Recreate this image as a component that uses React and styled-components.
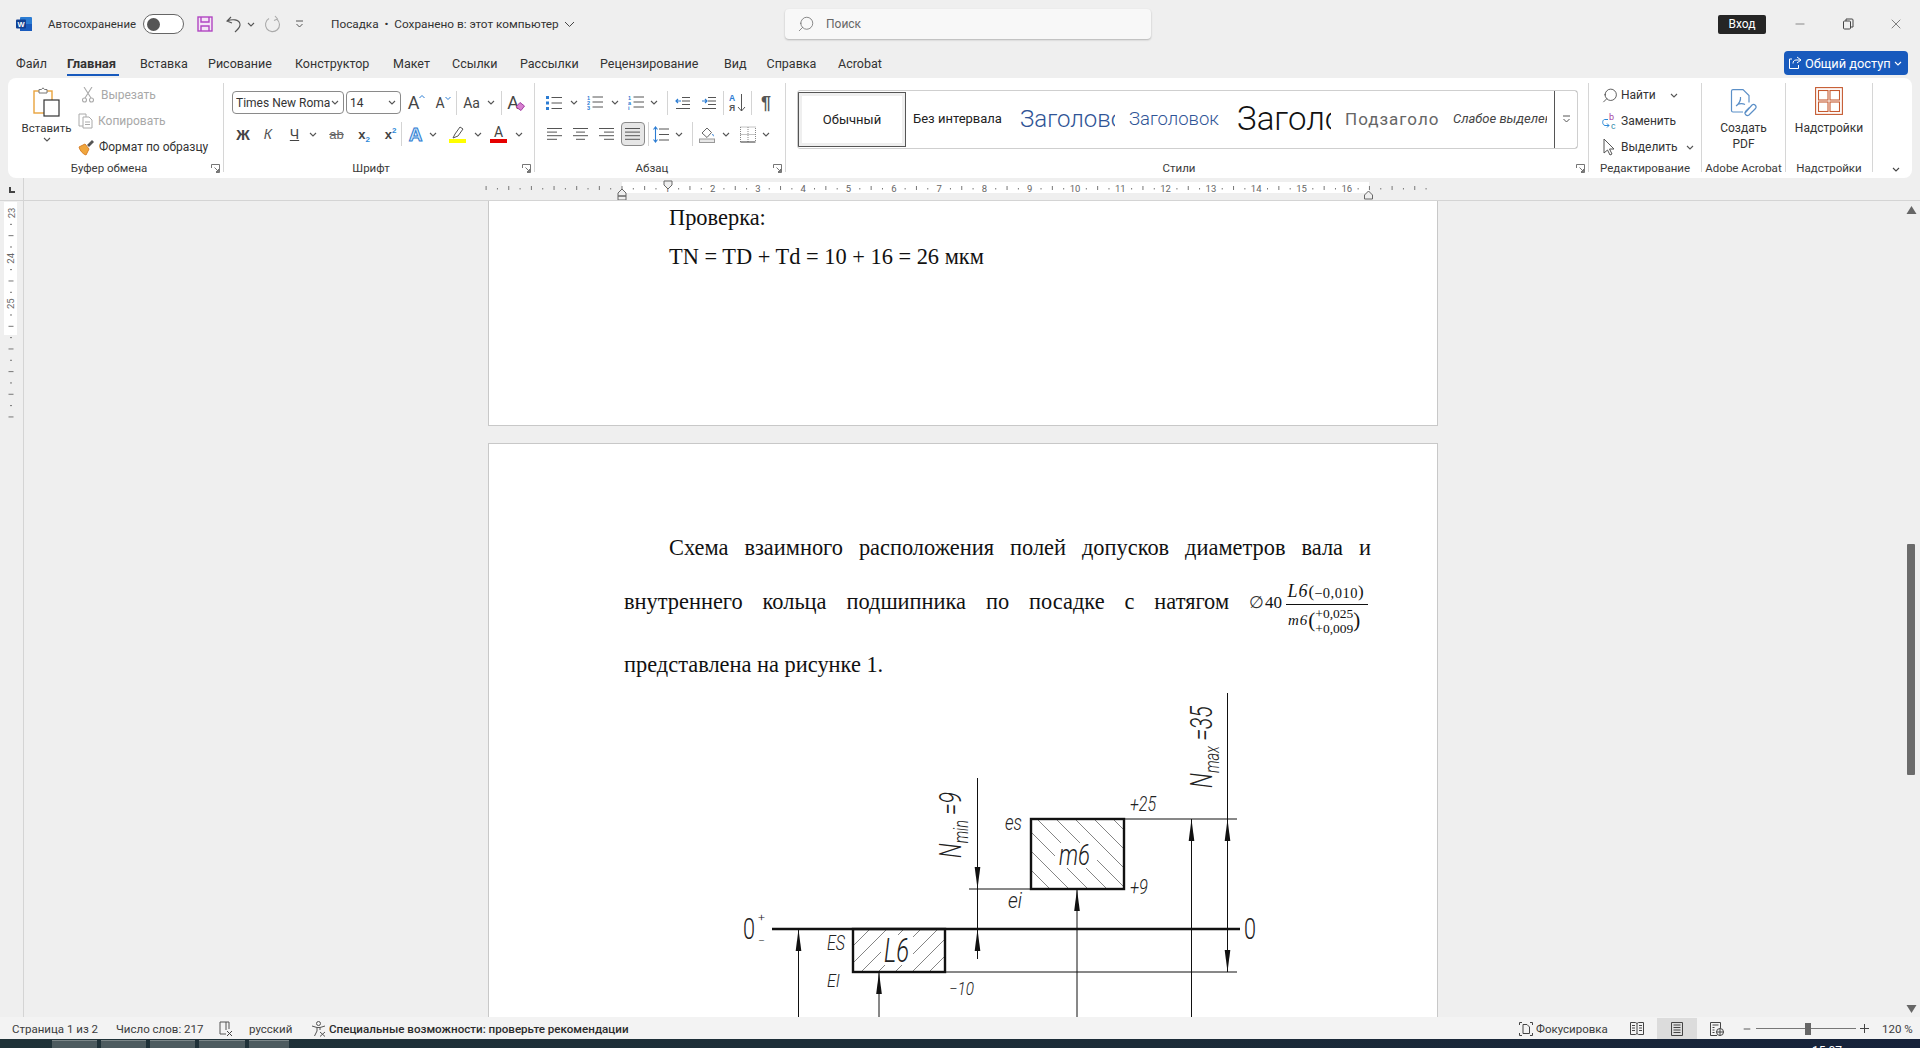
import React from "react";
import styled, { createGlobalStyle } from "styled-components";
import { Search, X, Minus } from "lucide-react";

const GlobalStyle = createGlobalStyle`
  html, body, #root { margin: 0; height: 100%; }
  body {
    background: #efefef;
    color: #333;
    font-family: Roboto, "Noto Sans", sans-serif;
    font-size: 12px;
    overflow: hidden;
  }
`;

const Window = styled.div`
  display: flex;
  flex-direction: column;
  height: 1048px;
  overflow: hidden;
`;

/* ---------- title bar ---------- */
const TitleBar = styled.div`
  display: grid;
  grid-template-columns: 785px 366px 1fr;
  align-items: center;
  height: 48px;
  flex: none;
`;
const TitleLeft = styled.div`
  display: flex;
  align-items: center;
  height: 100%;
  padding-left: 16px;
`;
const Cell = styled.div`
  display: flex;
  align-items: center;
  justify-content: ${(p) => p.$justify || "center"};
  flex: none;
  gap: ${(p) => p.$gap || 0}px;
  width: ${(p) => p.$w}px;
  height: 100%;
  white-space: nowrap;
`;
const AutoSave = styled(Cell)`
  font-size: 11.4px;
`;
const Toggle = styled.div`
  display: flex;
  align-items: center;
  box-sizing: border-box;
  width: 41px;
  height: 20px;
  margin-right: 13px;
  padding-left: 3px;
  border: 1px solid #666;
  border-radius: 10px;
  background: #fff;
  &::before {
    content: "";
    width: 13px;
    height: 13px;
    border-radius: 50%;
    background: #555;
  }
`;
const DocTitle = styled.div`
  display: flex;
  align-items: center;
  gap: 5px;
  margin-left: 14px;
  font-size: 11.8px;
  white-space: nowrap;
`;
const SearchBox = styled.div`
  display: flex;
  align-items: center;
  gap: 11px;
  box-sizing: border-box;
  height: 30px;
  padding-left: 12px;
  border-radius: 4px;
  background: #f8f8f8;
  box-shadow: 0 1px 2px rgba(0, 0, 0, 0.25);
  color: #666;
`;
const TitleRight = styled.div`
  display: flex;
  align-items: center;
  justify-content: flex-end;
  height: 100%;
`;
const SignIn = styled.div`
  display: flex;
  align-items: center;
  justify-content: center;
  width: 48px;
  height: 19px;
  margin-right: 10px;
  border-radius: 2px;
  background: #252525;
  color: #fff;
`;
const WinBtn = styled.div`
  display: flex;
  align-items: center;
  justify-content: center;
  width: 48px;
  height: 100%;
  color: #444;
`;

/* ---------- tabs ---------- */
const TabsRow = styled.div`
  display: flex;
  align-items: center;
  height: 30px;
  flex: none;
  padding-left: 16px;
`;
const Tab = styled.div`
  position: relative;
  flex: none;
  width: ${(p) => p.$w}px;
  font-size: ${(p) => (p.$active ? 13 : 12.5)}px;
  line-height: 31px;
  white-space: nowrap;
  font-weight: ${(p) => (p.$active ? 700 : 400)};
  &::after {
    content: "";
    display: ${(p) => (p.$active ? "block" : "none")};
    position: absolute;
    left: 0;
    bottom: 3px;
    width: 52px;
    height: 2px;
    background: #185abd;
  }
`;
const ShareBtn = styled.div`
  display: flex;
  align-items: center;
  gap: 3px;
  box-sizing: border-box;
  width: 124px;
  height: 24px;
  margin-left: auto;
  margin-right: 12px;
  padding-left: 4px;
  border-radius: 4px;
  background: #185abd;
  color: #fff;
  font-size: 12.8px;
  white-space: nowrap;
`;

/* ---------- ribbon ---------- */
const Ribbon = styled.div`
  display: flex;
  flex: none;
  box-sizing: border-box;
  height: 100px;
  margin: 0 8px;
  padding-top: 5px;
  border-radius: 8px;
  background: #fff;
`;
const Group = styled.div`
  display: grid;
  grid-template-rows: 73px 16px;
  flex: none;
  box-sizing: border-box;
  width: ${(p) => p.$w}px;
  height: 89px;
  border-right: 1px solid #d6d6d6;
`;
const GroupBody = styled.div`
  display: flex;
  flex-direction: ${(p) => p.$dir || "row"};
  gap: ${(p) => p.$gap || 0}px;
  padding: ${(p) => p.$pt || 0}px 0 0 ${(p) => p.$pl || 0}px;
  min-width: 0;
`;
const GroupFoot = styled.div`
  display: flex;
  align-items: center;
  height: 16px;
`;
const GroupLabel = styled.div`
  flex: none;
  width: ${(p) => p.$w}px;
  text-align: center;
  line-height: 24px;
  height: 16px;
  font-size: 11.5px;
  white-space: nowrap;
  color: #3a3a3a;
`;
const Launcher = styled.svg`
  margin: 8px 3px 0 auto;
  width: 9px;
  height: 9px;
`;
const ToolRow = styled.div`
  display: flex;
  align-items: center;
  flex: none;
  height: ${(p) => p.$h || 24}px;
`;
const Sep = styled.div`
  flex: none;
  width: 1px;
  height: 24px;
  margin-left: ${(p) => p.$ml || 0}px;
  background: #d4d4d4;
`;
const PasteColumn = styled.div`
  display: flex;
  flex-direction: column;
  align-items: center;
  flex: none;
  box-sizing: border-box;
  width: 70px;
  padding: 4px 0 0 7px;
  font-size: 11.5px;
  line-height: 17px;
  svg:first-child { margin-bottom: 3px; }
`;
const ClipRow = styled.div`
  display: flex;
  align-items: center;
  gap: 4px;
  height: 26px;
  margin-top: ${(p) => (p.$first ? -1 : 0)}px;
  padding-left: ${(p) => p.$pl || 0}px;
  white-space: nowrap;
  color: ${(p) => (p.$off ? "#a8a8a8" : "#333")};
`;
const Combo = styled.div`
  display: flex;
  align-items: center;
  justify-content: space-between;
  box-sizing: border-box;
  width: ${(p) => p.$w}px;
  height: 23px;
  margin-right: 2px;
  padding: 0 4px 0 3px;
  border: 1px solid #8a8a8a;
  border-radius: 4px;
  font-size: 12px;
  span {
    overflow: hidden;
    white-space: nowrap;
  }
`;
const FontName = styled.span`
  width: 94px;
`;
const Letter = styled.span`
  font-family: ${(p) => (p.$ui ? "Roboto, sans-serif" : '"Liberation Sans", sans-serif')};
  font-size: ${(p) => p.$size || 14}px;
  font-weight: ${(p) => p.$weight || 400};
  font-style: ${(p) => (p.$italic ? "italic" : "normal")};
  text-decoration: ${(p) => p.$line || "none"};
  color: ${(p) => p.$color || "#444"};
  line-height: 1;
`;
const OutlineLetter = styled(Letter)`
  -webkit-text-stroke: 1px #2b7cd3;
`;
const Small = styled.sub`
  font-size: 8px;
  color: #2b88d8;
  line-height: 0;
  vertical-align: ${(p) => (p.$up ? "6px" : "-3px")};
`;
const ColorBar = styled.div`
  display: flex;
  flex-direction: column;
  align-items: center;
  width: 17px;
  &::after {
    content: "";
    width: 17px;
    height: 4px;
    background: ${(p) => p.$color};
  }
`;
const PressedBox = styled.div`
  display: flex;
  align-items: center;
  justify-content: center;
  flex: none;
  box-sizing: border-box;
  width: 24px;
  height: 24px;
  margin-left: 2px;
  border: 1px solid #8a8a8a;
  border-radius: 4px;
  background: #e6e6e6;
`;
const EraserSlot = styled.span`
  display: flex;
  margin: 8px 0 0 -4px;
`;
const Gallery = styled.div`
  display: flex;
  box-sizing: border-box;
  width: 781px;
  height: 59px;
  border: 1px solid #cfcfcf;
  border-radius: 3px;
  overflow: hidden;
`;
const NormalStyle = styled.div`
  display: flex;
  align-items: center;
  justify-content: center;
  flex: none;
  box-sizing: border-box;
  width: 108px;
  margin: 1px 0;
  border: 1.5px solid #555;
  box-shadow: inset 0 0 0 3px #efefef;
  font-size: 13px;
  color: #222;
`;
const StyleCell = styled.div`
  display: flex;
  align-items: center;
  flex: none;
  box-sizing: border-box;
  width: ${(p) => p.$w}px;
  padding-left: ${(p) => p.$pl}px;
`;
const StyleText = styled.div`
  width: ${(p) => p.$clip}px;
  overflow: hidden;
  white-space: nowrap;
  font-size: ${(p) => p.$size}px;
  font-weight: ${(p) => p.$weight || 400};
  font-style: ${(p) => (p.$italic ? "italic" : "normal")};
  letter-spacing: ${(p) => p.$ls || 0}px;
  color: ${(p) => p.$color};
  line-height: 1.4;
`;
const GalleryMore = styled.div`
  display: flex;
  align-items: center;
  justify-content: center;
  flex: 1;
  margin: -1px;
  border: 1.5px solid #555;
  border-radius: 0 3px 3px 0;
  background: #fff;
`;
const EditRow = styled.div`
  display: flex;
  align-items: center;
  flex: none;
  width: 84px;
  height: 26px;
  margin-top: ${(p) => (p.$first ? -1 : 0)}px;
  white-space: nowrap;
  svg:first-child { flex: none; width: 18px; margin-right: 2px; }
`;
const EditChev = styled.span`
  display: flex;
  margin-left: ${(p) => (p.$end ? "auto" : "3px")};
`;
const BigTool = styled.div`
  display: flex;
  flex-direction: column;
  align-items: center;
  width: 100%;
  padding-top: ${(p) => p.$pt}px;
  text-align: center;
  line-height: 16px;
  svg { margin-bottom: ${(p) => p.$gap}px; }
`;
const Collapse = styled.div`
  display: flex;
  align-items: flex-end;
  justify-content: flex-end;
  flex: 1;
  padding: 0 12px 6px 0;
`;

/* ---------- rulers + document ---------- */
const RulerRow = styled.div`
  display: flex;
  flex: none;
  height: 23px;
  border-bottom: 1px solid #d4d4d4;
  box-sizing: border-box;
`;
const Corner = styled.div`
  display: flex;
  align-items: center;
  justify-content: center;
  flex: none;
  box-sizing: border-box;
  width: 24px;
  padding-top: 1px;
  border-right: 1px solid #d4d4d4;
`;
const Workspace = styled.div`
  display: flex;
  flex: 1;
  min-height: 0;
`;
const VRuler = styled.div`
  flex: none;
  box-sizing: border-box;
  width: 24px;
  border-right: 1px solid #d4d4d4;
`;
const Canvas = styled.div`
  display: flex;
  flex: 1;
  flex-direction: column;
  align-items: center;
  gap: 17px;
  overflow: hidden;
`;
const Page = styled.div`
  flex: none;
  box-sizing: border-box;
  width: 950px;
  height: ${(p) => p.$h}px;
  background: #fff;
  border: 1px solid #c8c8c8;
  border-top-width: ${(p) => (p.$open ? 0 : 1)}px;
  padding: ${(p) => p.$pt}px 66px 0 ${(p) => p.$pl}px;
  font-family: "Liberation Serif", "Times New Roman", serif;
  font-size: 22.4px;
  color: #111;
`;
const PlainLine = styled.div`
  height: 39px;
  line-height: 39px;
  margin-top: ${(p) => p.$mt || 0}px;
`;
const JustLine = styled.div`
  height: 54px;
  line-height: 54px;
  margin-bottom: ${(p) => p.$mb || 0}px;
  text-indent: ${(p) => p.$indent || 0}px;
  text-align: justify;
  text-align-last: ${(p) => (p.$last ? "left" : "justify")};
  white-space: nowrap;
`;
const Formula = styled.span`
  display: inline-flex;
  align-items: center;
  height: 54px;
  vertical-align: top;
  padding-right: 3px;
  text-indent: 0;
  text-align-last: left;
  line-height: 1;
`;
const Diameter = styled.span`
  font-size: 17px;
  color: #333;
  margin-right: 1px;
`;
const FormulaNumber = styled.span`
  font-size: 17px;
`;
const Fraction = styled.span`
  display: inline-flex;
  flex-direction: column;
  align-items: center;
  width: 81px;
  margin-left: 5px;
  margin-top: 11px;
`;
const Numer = styled.span`
  display: flex;
  align-items: center;
  width: 100%;
  height: 25px;
  border-bottom: 1px solid #111;
  font-size: 16px;
  padding-left: 1px;
  white-space: nowrap;
`;
const Denom = styled.span`
  display: flex;
  align-items: center;
  width: 100%;
  height: 32px;
  font-size: 15px;
  padding-left: 2px;
  white-space: nowrap;
`;
const Ital = styled.i`
  font-size: ${(p) => p.$size}px;
  letter-spacing: 1px;
`;
const LowLimit = styled.span`
  margin-top: 5px;
  font-size: 14.5px;
  letter-spacing: 0.5px;
`;
const Limits = styled.span`
  display: inline-flex;
  flex-direction: column;
  font-size: 13.5px;
  line-height: 15px;
`;
const Paren = styled.span`
  font-size: ${(p) => p.$size}px;
  font-weight: 300;
`;
const Drawing = styled.svg`
  display: block;
  margin: -2px 0 0 116px;
`;
const Scrollbar = styled.div`
  display: flex;
  flex-direction: column;
  align-items: center;
  flex: none;
  box-sizing: border-box;
  width: 18px;
  padding: 5px 0 4px;
`;
const Arrow = styled.svg`
  flex: none;
  margin-top: ${(p) => (p.$end ? "auto" : "0")};
`;
const Thumb = styled.div`
  flex: none;
  width: 8px;
  height: 231px;
  margin-top: 330px;
  background: #6b6b6b;
  border-radius: 1px;
`;

/* ---------- status + taskbar ---------- */
const StatusBar = styled.div`
  display: flex;
  align-items: center;
  flex: none;
  box-sizing: border-box;
  height: 22px;
  padding: 1px 0 0 12px;
  background: #f3f3f3;
  font-size: 11.5px;
  color: #3c3c3c;
  white-space: nowrap;
`;
const Strong = styled.div`
  font-weight: 500;
  font-size: 11.6px;
  color: #2c2c2c;
`;
const StatusRight = styled.div`
  display: flex;
  align-items: center;
  height: 100%;
  margin-left: auto;
`;
const ViewBtn = styled.div`
  display: flex;
  align-items: center;
  justify-content: center;
  flex: none;
  width: ${(p) => p.$w || 40}px;
  height: 100%;
  background: ${(p) => (p.$on ? "#dcdcdc" : "transparent")};
`;
const Slider = styled.div`
  display: flex;
  align-items: center;
  flex: none;
  width: 100px;
  &::before, &::after {
    content: "";
    height: 1px;
    background: #777;
  }
  &::before { flex: 49; }
  &::after { flex: 45; }
`;
const SliderThumb = styled.div`
  flex: none;
  width: 6px;
  height: 12px;
  background: #666;
`;
const Zoom = styled.div`
  margin-left: 9px;
  width: 38px;
`;
const Taskbar = styled.div`
  display: flex;
  flex: none;
  gap: 4px;
  height: 8px;
  padding: 1px 78px 0 52px;
  overflow: hidden;
  background: linear-gradient(90deg, #1f3238, #1c2c38 60%, #16223a);
`;
const TaskThumb = styled.div`
  flex: none;
  width: ${(p) => p.$w}px;
  height: 8px;
  background: #4d5b5f;
  border-top: 1px solid #7c8789;
  box-sizing: border-box;
`;
const Clock = styled.div`
  margin-left: auto;
  padding-top: 4px;
  color: #fff;
  font-size: 12px;
  line-height: 14px;
`;

/* ---------- small drawings ---------- */
const Chev = ({ c = "#555" }) => (
  <svg width="8" height="5" viewBox="0 0 8 5" fill="none">
    <path d="M1 1l3 3 3-3" stroke={c} strokeWidth="1.1" />
  </svg>
);
const TitleChev = () => (
  <svg width="11" height="7" viewBox="0 0 11 7" fill="none">
    <path d="M1 1l4.5 4.5L10 1" stroke="#444" />
  </svg>
);
const Launch = () => (
  <Launcher viewBox="0 0 9 9" fill="none" stroke="#666" strokeWidth="0.9">
    <path d="M.5 4V.5h8v8H5M3.5 3.5l4 4M7.5 5v2.5H5" />
  </Launcher>
);
const Lines = ({ rows, color = "#555", w = 16 }) => (
  <svg width={w} height="14" viewBox={`0 0 ${w} 14`} stroke={color} strokeWidth="1">
    {rows.map(([a, b], i) => (
      <path key={i} d={`M${a} ${1.5 + i * 3.6}H${b}`} />
    ))}
  </svg>
);
const WordLogo = () => (
  <svg width="16" height="16" viewBox="0 0 16 16">
    <rect x="4" y="1" width="12" height="14" rx="1" fill="#2b7cd3" />
    <rect x="4" y="8" width="12" height="7" fill="#185abd" />
    <rect x="0" y="3.5" width="10" height="9" rx="1" fill="#103f91" />
    <text x="5" y="10.5" textAnchor="middle" fontSize="7.5" fontWeight="700" fill="#fff" fontFamily="Liberation Sans">W</text>
  </svg>
);
const SaveIcon = () => (
  <svg width="16" height="16" viewBox="0 0 16 16" fill="#f3e5f5" stroke="#b146c2" strokeWidth="1.4">
    <rect x="1" y="1" width="14" height="14" />
    <path d="M4 1v5h8V1M4 15v-5h8v5" fill="none" />
  </svg>
);
const UndoIcon = () => (
  <svg width="16" height="18" viewBox="0 0 16 18" fill="none" stroke="#555" strokeWidth="1.1">
    <path d="M5 2L1 6l5 2M1 6c5-2 12-2 13 3 .6 3.4-3 6-5 8" />
  </svg>
);
const RedoIcon = () => (
  <svg width="17" height="18" viewBox="0 0 17 18" fill="none" stroke="#aaa" strokeWidth="1.1">
    <path d="M11 1l2.5 3-3.5 1.5M13 4.3A7 7 0 1 1 5 3.6" />
  </svg>
);
const CustomizeIcon = () => (
  <svg width="9" height="9" viewBox="0 0 9 9" fill="none" stroke="#555">
    <path d="M1 1h7M1.5 4l3 3 3-3" />
  </svg>
);
const ShareIcon = () => (
  <svg width="14" height="14" viewBox="0 0 14 14" fill="none" stroke="#fff" strokeWidth="1">
    <path d="M9 1l4 3-4 3M13 4H8C6 4 5 5.5 5 7.5M4 3H1.5v9.5h9V9" />
  </svg>
);
const PasteIcon = () => (
  <svg width="28" height="30" viewBox="0 0 28 30" fill="none">
    <rect x="1" y="4" width="18" height="22" fill="#fff" stroke="#e8a33d" strokeWidth="1.4" />
    <path d="M6 4V2.5h2.5L10 .8l1.5 1.7H14V6H6z" fill="#fff" stroke="#777" />
    <rect x="11" y="13" width="15" height="16" fill="#fff" stroke="#333" strokeWidth="1.2" />
  </svg>
);
const CutIcon = () => (
  <svg width="12" height="16" viewBox="0 0 12 16" fill="none" stroke="#aaa" strokeWidth="1.1">
    <path d="M2 0l7 11M10 0L3 11" />
    <circle cx="2.5" cy="13" r="2" />
    <circle cx="9.5" cy="13" r="2" />
  </svg>
);
const CopyIcon = () => (
  <svg width="16" height="16" viewBox="0 0 16 16" fill="#fff" stroke="#aaa">
    <path d="M1 1h7v12H1z" />
    <path d="M5 4h6l3 3v8H5z" />
    <path d="M7 9h5M7 11.5h5" />
  </svg>
);
const BrushIcon = () => (
  <svg width="17" height="18" viewBox="0 0 17 18">
    <path d="M1 9l6-3 4 5-3 6C5 16 2 13 1 9z" fill="#f0a63c" stroke="#d9822b" />
    <path d="M9 7l5-5 2 2-5 5z" fill="#555" />
  </svg>
);
const BulletsIcon = () => (
  <svg width="16" height="14" viewBox="0 0 16 14">
    <g fill="#2b7cd3"><rect y="0" width="3" height="3" /><rect y="5.5" width="3" height="3" /><rect y="11" width="3" height="3" /></g>
    <path d="M5.5 1.5H16M5.5 7H16M5.5 12.5H16" stroke="#555" />
  </svg>
);
const NumberedIcon = ({ labels = ["1", "2", "3"] }) => (
  <svg width="16" height="15" viewBox="0 0 16 15">
    {labels.map((l, i) => (
      <text key={l} x="0" y={4.6 + i * 5} fontSize="5.5" fontWeight="700" fill="#2b7cd3" fontFamily="Liberation Sans">{l}</text>
    ))}
    <path d="M5.5 2H16M5.5 7H16M5.5 12H16" stroke="#555" />
  </svg>
);
const IndentIcon = ({ flip }) => (
  <svg width="15" height="14" viewBox="0 0 15 14" fill="none">
    <path d="M7 1.5h8M7 5h8M7 8.5h8M1 12.5h14" stroke="#555" />
    <path d={flip ? "M1 5h5M4 3l2 2-2 2" : "M6 5H1M3 3L1 5l2 2"} stroke="#2b7cd3" strokeWidth="1.2" />
  </svg>
);
const SortIcon = () => (
  <svg width="17" height="20" viewBox="0 0 17 20">
    <text x="0" y="8" fontSize="8.5" fontWeight="700" fill="#2b7cd3" fontFamily="Liberation Sans">А</text>
    <text x="0" y="18" fontSize="8.5" fontWeight="700" fill="#555" fontFamily="Liberation Sans">Я</text>
    <path d="M12.5 1v17M9 14l3.5 4 3.5-4" fill="none" stroke="#555" />
  </svg>
);
const LineSpacingIcon = () => (
  <svg width="16" height="17" viewBox="0 0 16 17" fill="none">
    <path d="M6 3h10M6 8.5h10M6 14h10" stroke="#555" />
    <path d="M2.5 1v15M.5 3.5l2-2.5 2 2.5M.5 13.5l2 2.5 2-2.5" stroke="#2b7cd3" strokeWidth="1.1" />
  </svg>
);
const ShadingIcon = () => (
  <svg width="16" height="18" viewBox="0 0 16 18" fill="none" stroke="#666">
    <path d="M3 8l5-5 4.5 4.5L8 12.5z" />
    <path d="M13.5 9c.6 1 1 1.6 1 2.2" stroke="#2b7cd3" />
    <rect x=".5" y="14" width="15" height="3.5" fill="#e8e8e8" stroke="#999" />
  </svg>
);
const BordersIcon = () => (
  <svg width="16" height="17" viewBox="0 0 16 17" fill="none" stroke="#888" strokeDasharray="1 1">
    <path d="M.5 1h15v15M.5 1v15M8 1v15M.5 8.5h15" />
    <path d="M.5 16h15" stroke="#333" strokeDasharray="none" />
  </svg>
);
const PenIcon = () => (
  <svg width="17" height="13" viewBox="0 0 17 13" fill="none" stroke="#555">
    <path d="M4 12l2-4 5-7 3 2-5 7z" />
  </svg>
);
const EraserIcon = () => (
  <svg width="10" height="9" viewBox="0 0 10 9">
    <path d="M5 .5l4.5 3.500-3.500 4.500L1 5z" fill="#d77fd0" stroke="#a340a3" />
  </svg>
);
const CaretBox = styled.svg`
  align-self: flex-start;
  margin-top: ${(p) => (p.$down ? 5 : 3)}px;
`;
const Caret = ({ down }) => (
  <CaretBox $down={down} width="6" height="5" viewBox="0 0 6 5" fill="none" stroke="#2b7cd3">
    <path d={down ? "M.5 1L3 3.5 5.5 1" : "M.5 4L3 1.5 5.5 4"} />
  </CaretBox>
);
const ReplaceIcon = () => (
  <svg width="18" height="18" viewBox="0 0 18 18" fill="none">
    <text x="8" y="7.5" fontSize="9" fill="#a33ea1" fontFamily="Liberation Sans">b</text>
    <text x="10" y="17" fontSize="9" fill="#2b88a8" fontFamily="Liberation Sans">c</text>
    <path d="M7 7.5H3.500C1 8 1 13 4 13.500H8M6 11.500l2 2-2 2" stroke="#2b88d8" />
  </svg>
);
const SelectIcon = () => (
  <svg width="18" height="18" viewBox="0 0 18 18" fill="#fff" stroke="#555">
    <path d="M3 1v14l3.5-3 2.5 5 2-1-2.5-5H13z" />
  </svg>
);
const PdfIcon = () => (
  <svg width="27" height="29" viewBox="0 0 27 29" fill="none" stroke="#5b8fc7" strokeWidth="1.2">
    <path d="M13 23H3a1.500 1.500 0 0 1-1.500-1.500V2A1.500 1.500 0 0 1 3 .6h10l6 6v7" />
    <path d="M6 17c3-2 5-6 4.500-9M7 15.500c3-1 6-1 8 0" />
    <path d="M15 24l7-8a2.500 2.500 0 0 1 3.500 3.500L19 26a2.500 2.500 0 0 1-3.500-3.500l4-4" />
  </svg>
);
const AddinsIcon = () => (
  <svg width="28" height="28" viewBox="0 0 28 28" fill="#fff" stroke="#c55a30" strokeWidth="1.1">
    <rect x=".6" y=".6" width="26.8" height="26.8" />
    <rect x="3.5" y="3.5" width="9.5" height="9.5" />
    <rect x="15" y="3.5" width="9.5" height="9.5" />
    <rect x="3.5" y="15" width="9.5" height="9.5" />
    <rect x="15" y="15" width="9.5" height="9.5" />
  </svg>
);
const ProofIcon = () => (
  <svg width="15" height="16" viewBox="0 0 15 16" fill="none" stroke="#555">
    <path d="M7 13H1V1h9v7M7 1v8" />
    <path d="M8 10l5 5M13 10l-5 5" stroke="#444" />
  </svg>
);
const AccessIcon = () => (
  <svg width="15" height="16" viewBox="0 0 15 16" fill="none" stroke="#555">
    <circle cx="7.5" cy="2.5" r="2" />
    <path d="M1 5l5 1.500h3L14 5M6 6.500V10l-2.500 5M9 6.500V9" />
    <path d="M9 11l5 4.500M14 11l-5 4.500" />
  </svg>
);
const FocusIcon = () => (
  <svg width="14" height="14" viewBox="0 0 14 14" fill="none" stroke="#444">
    <path d="M.5 3V.5H3M11 .5h2.500V3M.5 11v2.500H3M11 13.500h2.500V11" />
    <path d="M4 2.500h4l2.500 2.500v6.500H4z" />
  </svg>
);
const ReadIcon = () => (
  <svg width="14" height="13" viewBox="0 0 14 13" fill="none" stroke="#444">
    <path d="M.5.5h5l1.500 1 1.500-1h5v12h-5L7 11.500 5.500 12.500h-5zM7 1.500v10M2 3.500h3M2 6h3M2 8.500h3M9 3.500h3M9 6h3M9 8.500h3" />
  </svg>
);
const PrintIcon = () => (
  <svg width="12" height="14" viewBox="0 0 12 14" fill="none" stroke="#444">
    <path d="M.5.5h11v13H.5zM2.500 3h7M2.500 5.500h7M2.500 8h7M2.500 10.500h7" />
  </svg>
);
const WebIcon = () => (
  <svg width="14" height="14" viewBox="0 0 14 14" fill="none" stroke="#444">
    <path d="M7 13.500H.5V.5h10v6M2.500 3h6M2.500 5.500h2M2.500 8h2M2.500 10.500h2" />
    <circle cx="10" cy="10" r="3.5" />
    <path d="M6.500 10h7M10 6.500v7" />
  </svg>
);

/* ---------- rulers ---------- */
const CM = 45.3;
const ZERO = 622;
const topTicks = [];
for (let i = -12; i <= 71; i++) topTicks.push(i);

const TopRuler = () => (
  <svg width="1896" height="22" viewBox="24 178 1896 22">
    <rect x={ZERO} y="182" width="747" height="11" fill="#fff" />
    {topTicks.map((i) => {
      const x = ZERO + (i * CM) / 4;
      if (i > 0 && i % 4 === 0 && i <= 64) {
        return (
          <text key={i} x={x} y="192" textAnchor="middle" fontSize="9.5" fill="#666" fontFamily="Roboto">{i / 4}</text>
        );
      }
      return i % 2 === 0
        ? <path key={i} d={`M${x} 186v4`} stroke="#777" />
        : <path key={i} d={`M${x} 188v1.5`} stroke="#777" />;
    })}
    <g fill="#efefef" stroke="#666">
      <path d="M664 181h8v4l-4 4-4-4z" />
      <path d="M618 193l4-4 4 4v3h-8zM618 196h8v4h-8z" />
      <path d="M1364.5 195l4-4 4 4v4h-8z" />
    </g>
  </svg>
);

const sideTicks = [];
for (let i = 0; i < 19; i++) sideTicks.push(i);

const SideSvg = styled.svg`
  display: block;
`;
const SideRuler = () => (
  <SideSvg width="23" height="240" viewBox="0 201 23 240">
    <rect x="4" y="202" width="13" height="133" fill="#fff" />
    {sideTicks.map((i) => {
      const y = 213 + i * 11.33;
      const x = 11;
      if (i % 4 === 0 && i < 12) {
        return (
          <text key={i} x={x} y={y} textAnchor="middle" dominantBaseline="central" fontSize="9.5" fill="#666" fontFamily="Roboto" transform={`rotate(-90 ${x} ${y})`}>{23 + i / 4}</text>
        );
      }
      return i % 2 === 0
        ? <path key={i} d={`M${x - 2.5} ${y}h5`} stroke="#777" />
        : <path key={i} d={`M${x - 1} ${y}h2`} stroke="#777" />;
    })}
  </SideSvg>
);

/* ---------- tolerance diagram (real screen coordinates) ---------- */
const hatch = (x1, x2, y1, y2, step, dir) => {
  const out = [];
  const h = y2 - y1;
  for (let x = x1 - h; x < x2 + h; x += step) {
    out.push(dir > 0
      ? `M${x} ${y2}L${x + h} ${y1}`
      : `M${x} ${y1}L${x + h} ${y2}`);
  }
  return out.join("");
};
const Tip = ({ x, y, down }) => (
  <path d={down ? `M${x} ${y}l-2.8 -22h5.6z` : `M${x} ${y}l-2.8 22h5.6z`} fill="#111" />
);
const Note = ({ x, y, w, size = 16, plain, children }) => (
  <text
    x={x}
    y={y}
    fontSize={size}
    fontStyle={plain ? "normal" : "italic"}
    fontWeight="300"
    fontFamily="Roboto, sans-serif"
    fill="#222"
    textLength={w}
    lengthAdjust="spacingAndGlyphs"
  >
    {children}
  </text>
);

const ToleranceScheme = () => (
  <Drawing width="520" height="330" viewBox="740 690 520 330">
    <defs>
      <clipPath id="m6clip"><rect x="1031" y="819" width="93" height="70" /></clipPath>
      <clipPath id="l6clip"><rect x="853" y="929" width="92" height="43" /></clipPath>
    </defs>
    <path clipPath="url(#m6clip)" d={hatch(1031, 1124, 819, 889, 19, -1)} stroke="#666" strokeWidth="0.8" fill="none" />
    <path clipPath="url(#l6clip)" d={hatch(853, 945, 929, 972, 17, 1)} stroke="#666" strokeWidth="0.8" fill="none" />
    <rect x="1055" y="843" width="42" height="25" fill="#fff" />
    <rect x="881" y="935" width="32" height="30" fill="#fff" />
    <g stroke="#111" fill="none" strokeWidth="1">
      <path d="M1124 819H1237M945 972H1237M969 889H1031" />
      <path d="M977.5 778V959M1227.5 693V972M1191.5 819V1018M1077 889V1018M879 972V1018M798.5 929V1018" />
    </g>
    <g stroke="#111" fill="none" strokeWidth="2.4">
      <path d="M772 929H1240" />
      <rect x="853" y="929" width="92" height="43" />
      <rect x="1031" y="819" width="93" height="70" />
    </g>
    <Tip x={977.5} y={889} down />
    <Tip x={977.5} y={929} />
    <Tip x={1227.5} y={819} />
    <Tip x={1227.5} y={972} down />
    <Tip x={1191.5} y={819} />
    <Tip x={1077} y={889} />
    <Tip x={879} y={972} />
    <Tip x={798.5} y={929} />
    <Note x={743} y={939} w={12} size={30} plain>0</Note>
    <Note x={758} y={921} w={7} size={11} plain>+</Note>
    <Note x={758} y={944} w={7} size={11} plain>−</Note>
    <Note x={1244} y={939} w={12} size={30} plain>0</Note>
    <Note x={827} y={950} w={18} size={21}>ES</Note>
    <Note x={827} y={987} w={13} size={18}>EI</Note>
    <Note x={949} y={995} w={25} size={19}>−10</Note>
    <Note x={884} y={962} w={25} size={33}>L6</Note>
    <Note x={1059} y={865} w={31} size={29}>m6</Note>
    <Note x={1005} y={830} w={17} size={22}>es</Note>
    <Note x={1008} y={908} w={14} size={22}>ei</Note>
    <Note x={1130} y={811} w={26} size={21}>+25</Note>
    <Note x={1130} y={894} w={18} size={21}>+9</Note>
    <text transform="rotate(-90 961 858)" x="961" y="858" fontStyle="italic" fontWeight="300" fontFamily="Roboto, sans-serif" fill="#222" fontSize="31" textLength="66" lengthAdjust="spacingAndGlyphs">
      N<tspan fontSize="21" dy="7">min</tspan><tspan dy="-7"> =9</tspan>
    </text>
    <text transform="rotate(-90 1212 788)" x="1212" y="788" fontStyle="italic" fontWeight="300" fontFamily="Roboto, sans-serif" fill="#222" fontSize="31" textLength="82" lengthAdjust="spacingAndGlyphs">
      N<tspan fontSize="21" dy="7">max</tspan><tspan dy="-7"> =35</tspan>
    </text>
  </Drawing>
);

const tabs = [
  ["Файл", 51], ["Главная", 73], ["Вставка", 68], ["Рисование", 87], ["Конструктор", 98],
  ["Макет", 59], ["Ссылки", 68], ["Рассылки", 80], ["Рецензирование", 124], ["Вид", 42.5],
  ["Справка", 71.5], ["Acrobat", 60],
];

const MirroredSearch = styled(Search)`
  transform: scaleX(-1);
`;

export default function App() {
  return (
    <Window>
      <GlobalStyle />
      <TitleBar>
        <TitleLeft>
          <Cell $w={32} $justify="flex-start"><WordLogo /></Cell>
          <AutoSave $w={95} $justify="flex-start">Автосохранение</AutoSave>
          <Toggle />
          <Cell $w={29} $justify="flex-start"><SaveIcon /></Cell>
          <Cell $w={38} $justify="flex-start" $gap={5}><UndoIcon /><Chev /></Cell>
          <Cell $w={31} $justify="flex-start"><RedoIcon /></Cell>
          <Cell $w={22} $justify="flex-start"><CustomizeIcon /></Cell>
          <DocTitle>Посадка&nbsp;&nbsp;•&nbsp;&nbsp;Сохранено в: этот компьютер <TitleChev /></DocTitle>
        </TitleLeft>
        <SearchBox><MirroredSearch size={18} strokeWidth={1} />Поиск</SearchBox>
        <TitleRight>
          <SignIn>Вход</SignIn>
          <WinBtn><Minus size={14} strokeWidth={1} /></WinBtn>
          <WinBtn>
            <svg width="12" height="12" viewBox="0 0 12 12" fill="none" stroke="#444">
              <rect x="1.5" y="3" width="7" height="8" rx="1" />
              <path d="M4 3V1h6a1 1 0 0 1 1 1v7H8.5" />
            </svg>
          </WinBtn>
          <WinBtn><X size={16} strokeWidth={1} /></WinBtn>
        </TitleRight>
      </TitleBar>

      <TabsRow>
        {tabs.map(([label, w]) => (
          <Tab key={label} $w={w} $active={label === "Главная"}>{label}</Tab>
        ))}
        <ShareBtn><ShareIcon />Общий доступ <Chev c="#fff" /></ShareBtn>
      </TabsRow>

      <Ribbon>
        <Group $w={216}>
          <GroupBody>
            <PasteColumn>
              <PasteIcon />
              <div>Вставить</div>
              <Chev />
            </PasteColumn>
            <div>
              <ClipRow $first $off $pl={4}><CutIcon />&nbsp;Вырезать</ClipRow>
              <ClipRow $off><CopyIcon />Копировать</ClipRow>
              <ClipRow><BrushIcon />Формат по образцу</ClipRow>
            </div>
          </GroupBody>
          <GroupFoot><GroupLabel $w={202}>Буфер обмена</GroupLabel><Launch /></GroupFoot>
        </Group>

        <Group $w={311}>
          <GroupBody $dir="column" $pt={8} $pl={8} $gap={8}>
            <ToolRow $h={23}>
              <Combo $w={112}><FontName>Times New Roman</FontName><Chev /></Combo>
              <Combo $w={55}><span>14</span><Chev /></Combo>
              <Cell $w={27}><Letter $size={18} $ui>A</Letter><Caret /></Cell>
              <Cell $w={26}><Letter $size={14} $ui>A</Letter><Caret down /></Cell>
              <Sep />
              <Cell $w={44} $gap={7}><Letter $size={14} $ui>Aa</Letter><Chev /></Cell>
              <Sep />
              <Cell $w={28}><Letter $size={18} $ui>A</Letter><EraserSlot><EraserIcon /></EraserSlot></Cell>
            </ToolRow>
            <ToolRow>
              <Cell $w={22}><Letter $size={15} $weight={700}>Ж</Letter></Cell>
              <Cell $w={28}><Letter $size={14} $italic $color="#555">К</Letter></Cell>
              <Cell $w={43} $gap={10}><Letter $size={14} $line="underline">Ч</Letter><Chev /></Cell>
              <Cell $w={23}><Letter $size={13} $line="line-through" $color="#666">ab</Letter></Cell>
              <Cell $w={32}><Letter $size={13} $weight={700}>x<Small>2</Small></Letter></Cell>
              <Cell $w={21}><Letter $size={13} $weight={700}>x<Small $up>2</Small></Letter></Cell>
              <Sep />
              <Cell $w={42} $gap={7}><OutlineLetter $size={19} $weight={700} $color="#cfe6f8">A</OutlineLetter><Chev /></Cell>
              <Cell $w={43} $gap={8}><ColorBar $color="#ffff00"><PenIcon /></ColorBar><Chev /></Cell>
              <Cell $w={39} $gap={8}><ColorBar $color="#e60000"><Letter $size={14} $ui>A</Letter></ColorBar><Chev /></Cell>
            </ToolRow>
          </GroupBody>
          <GroupFoot><GroupLabel $w={294}>Шрифт</GroupLabel><Launch /></GroupFoot>
        </Group>

        <Group $w={251}>
          <GroupBody $dir="column" $pt={8} $pl={8} $gap={8}>
            <ToolRow $h={23}>
              <Cell $w={37} $gap={8}><BulletsIcon /><Chev /></Cell>
              <Cell $w={45} $gap={8}><NumberedIcon /><Chev /></Cell>
              <Cell $w={35} $gap={6}><NumberedIcon labels={["1", "a", "i"]} /><Chev /></Cell>
              <Sep $ml={7} />
              <Cell $w={28}><IndentIcon /></Cell>
              <Cell $w={24}><IndentIcon flip /></Cell>
              <Sep $ml={3} />
              <Cell $w={27}><SortIcon /></Cell>
              <Sep />
              <Cell $w={28}><Letter $size={18} $weight={700} $color="#555">¶</Letter></Cell>
            </ToolRow>
            <ToolRow>
              <Cell $w={24}><Lines rows={[[0, 15], [0, 10], [0, 15], [0, 10]]} /></Cell>
              <Cell $w={28}><Lines rows={[[0, 15], [3, 12], [0, 15], [3, 12]]} /></Cell>
              <Cell $w={24}><Lines rows={[[0, 15], [5, 15], [0, 15], [5, 15]]} /></Cell>
              <PressedBox><Lines rows={[[0, 15], [0, 15], [0, 15], [0, 15]]} /></PressedBox>
              <Sep $ml={3} />
              <Cell $w={38} $gap={6}><LineSpacingIcon /><Chev /></Cell>
              <Sep $ml={5} />
              <Cell $w={42} $gap={7}><ShadingIcon /><Chev /></Cell>
              <Cell $w={39} $gap={6}><BordersIcon /><Chev /></Cell>
            </ToolRow>
          </GroupBody>
          <GroupFoot><GroupLabel $w={234}>Абзац</GroupLabel><Launch /></GroupFoot>
        </Group>

        <Group $w={803}>
          <GroupBody $pt={7} $pl={11}>
            <Gallery>
              <NormalStyle>Обычный</NormalStyle>
              <StyleCell $w={108} $pl={7}><StyleText $clip={96} $size={13} $color="#222">Без интервала</StyleText></StyleCell>
              <StyleCell $w={108} $pl={6}><StyleText $clip={95} $size={24} $weight={300} $color="#2f5496">Заголовок 1</StyleText></StyleCell>
              <StyleCell $w={108} $pl={7}><StyleText $clip={96} $size={18.5} $weight={300} $color="#2f5496">Заголовок</StyleText></StyleCell>
              <StyleCell $w={108} $pl={7}><StyleText $clip={94} $size={33} $weight={300} $color="#111">Заголовок</StyleText></StyleCell>
              <StyleCell $w={108} $pl={7}><StyleText $clip={94} $size={17} $ls={1} $color="#666">Подзаголовок</StyleText></StyleCell>
              <StyleCell $w={109} $pl={7}><StyleText $clip={94} $size={13} $italic $color="#444">Слабое выделение</StyleText></StyleCell>
              <GalleryMore><CustomizeIcon /></GalleryMore>
            </Gallery>
          </GroupBody>
          <GroupFoot><GroupLabel $w={786}>Стили</GroupLabel><Launch /></GroupFoot>
        </Group>

        <Group $w={113}>
          <GroupBody $dir="column" $pl={12}>
            <EditRow $first><MirroredSearch size={17} strokeWidth={1.1} />Найти<EditChev $end><Chev /></EditChev></EditRow>
            <EditRow><ReplaceIcon />Заменить</EditRow>
            <EditRow><SelectIcon />Выделить<EditChev><Chev /></EditChev></EditRow>
          </GroupBody>
          <GroupFoot><GroupLabel $w={112}>Редактирование</GroupLabel></GroupFoot>
        </Group>

        <Group $w={84}>
          <GroupBody>
            <BigTool $pt={6} $gap={2}><PdfIcon />Создать<br />PDF</BigTool>
          </GroupBody>
          <GroupFoot><GroupLabel $w={83}>Adobe Acrobat</GroupLabel></GroupFoot>
        </Group>

        <Group $w={87}>
          <GroupBody>
            <BigTool $pt={4} $gap={5}><AddinsIcon />Надстройки</BigTool>
          </GroupBody>
          <GroupFoot><GroupLabel $w={86}>Надстройки</GroupLabel></GroupFoot>
        </Group>

        <Collapse><Chev c="#444" /></Collapse>
      </Ribbon>

      <RulerRow>
        <Corner>
          <svg width="8" height="8" viewBox="0 0 8 8"><path d="M1 1h2v4h4v2H1z" fill="#444" /></svg>
        </Corner>
        <TopRuler />
      </RulerRow>

      <Workspace>
        <VRuler><SideRuler /></VRuler>
        <Canvas>
          <Page $open $h={225} $pt={0} $pl={180}>
            <PlainLine $mt={-3}>Проверка:</PlainLine>
            <PlainLine>TN = TD + Td = 10 + 16 = 26 мкм</PlainLine>
          </Page>
          <Page $h={1400} $pt={77} $pl={135}>
            <JustLine $indent={45}>Схема взаимного расположения полей допусков диаметров вала и</JustLine>
            <JustLine $mb={9}>
              внутреннего кольца подшипника по посадке с натягом{" "}
              <Formula>
                <Diameter>∅</Diameter>
                <FormulaNumber>40</FormulaNumber>
                <Fraction>
                  <Numer><Ital $size={18}>L6</Ital><Paren $size={17}>(</Paren><LowLimit>−0,010</LowLimit><Paren $size={17}>)</Paren></Numer>
                  <Denom><Ital $size={15}>m6</Ital><Paren $size={21}>(</Paren><Limits><span>+0,025</span><span>+0,009</span></Limits><Paren $size={21}>)</Paren></Denom>
                </Fraction>
              </Formula>
            </JustLine>
            <JustLine $last>представлена на рисунке 1.</JustLine>
            <ToleranceScheme />
          </Page>
        </Canvas>
        <Scrollbar>
          <Arrow width="11" height="8" viewBox="0 0 11 8"><path d="M5.5 0l5 8H.5z" fill="#666" /></Arrow>
          <Thumb />
          <Arrow $end width="11" height="8" viewBox="0 0 11 8"><path d="M5.5 8l5-8H.5z" fill="#666" /></Arrow>
        </Scrollbar>
      </Workspace>

      <StatusBar>
        <Cell $w={104} $justify="flex-start">Страница 1 из 2</Cell>
        <Cell $w={103} $justify="flex-start">Число слов: 217</Cell>
        <Cell $w={30} $justify="flex-start"><ProofIcon /></Cell>
        <Cell $w={62} $justify="flex-start">русский</Cell>
        <Cell $w={18} $justify="flex-start"><AccessIcon /></Cell>
        <Strong>Специальные возможности: проверьте рекомендации</Strong>
        <StatusRight>
          <Cell $w={17} $justify="flex-start"><FocusIcon /></Cell>
          <Cell $w={81} $justify="flex-start">Фокусировка</Cell>
          <ViewBtn><ReadIcon /></ViewBtn>
          <ViewBtn $on><PrintIcon /></ViewBtn>
          <ViewBtn><WebIcon /></ViewBtn>
          <ViewBtn $w={19}><Minus size={10} /></ViewBtn>
          <Slider><SliderThumb /></Slider>
          <ViewBtn $w={17}><svg width="9" height="9" viewBox="0 0 9 9"><path d="M0 4.5h9M4.5 0v9" stroke="#444" /></svg></ViewBtn>
          <Zoom>120 %</Zoom>
        </StatusRight>
      </StatusBar>

      <Taskbar>
        <TaskThumb $w={45} />
        <TaskThumb $w={45} />
        <TaskThumb $w={45} />
        <TaskThumb $w={46} />
        <TaskThumb $w={40} />
        <Clock>15:07</Clock>
      </Taskbar>
    </Window>
  );
}
